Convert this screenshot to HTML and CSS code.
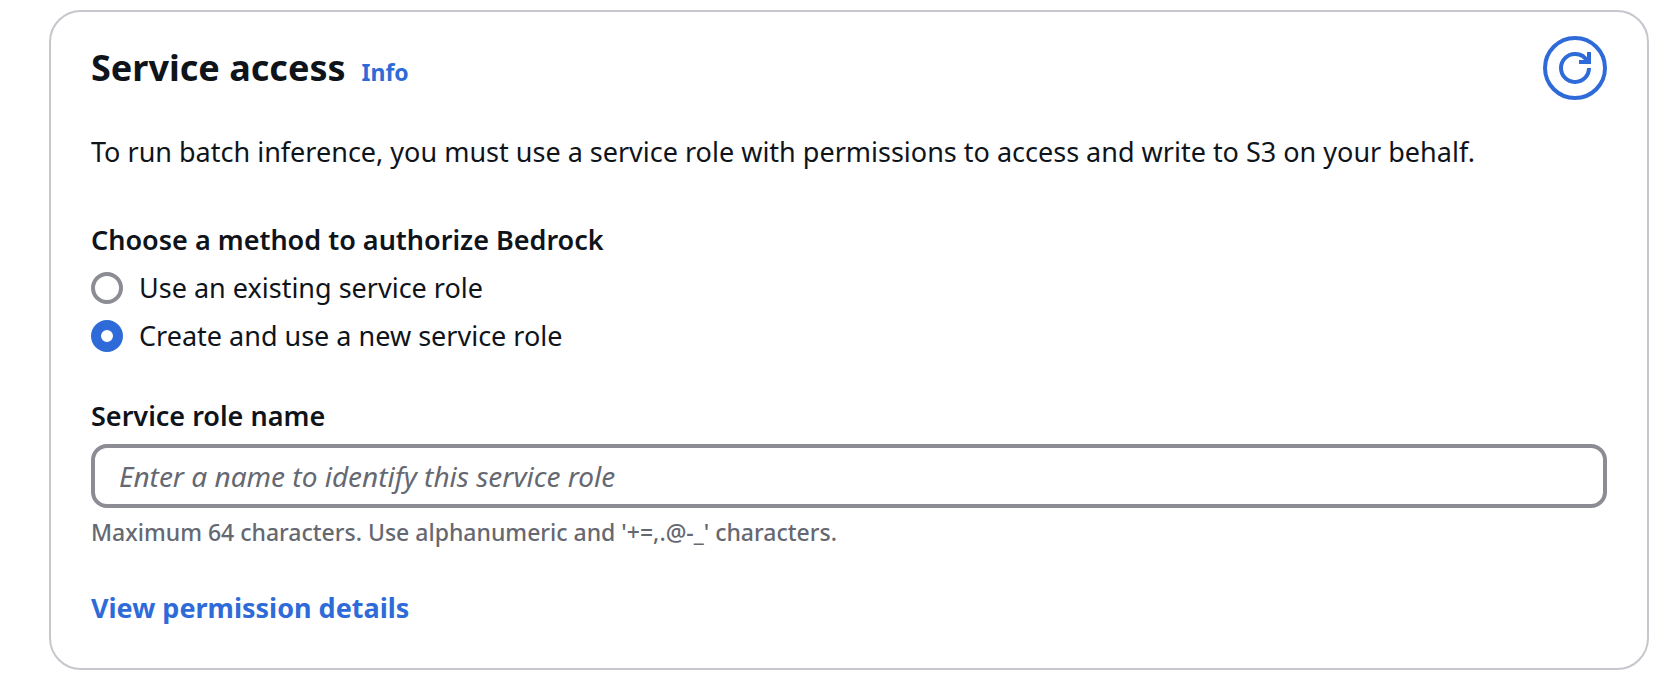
FILE: index.html
```html
<!DOCTYPE html>
<html lang="en">
<head>
    <meta charset="UTF-8">
    <meta name="viewport" content="width=device-width, initial-scale=1.0">
    <title>Service access</title>
    <link rel="stylesheet" href="styles.css">
</head>
<body>
    <form class="card">
        <header class="card-header">
            <div class="title">
                <h2>Service access</h2>
                <a class="info" href="#info">Info</a>
            </div>
            <button class="refresh" type="button" aria-label="Refresh">
                <svg viewBox="0 0 16 16" aria-hidden="true">
                    <path d="M10 5h5V0"/>
                    <path d="M15 8a6.957 6.957 0 0 1-7 7 6.957 6.957 0 0 1-7-7 6.957 6.957 0 0 1 7-7 6.87 6.87 0 0 1 6.3 4"/>
                </svg>
            </button>
        </header>

        <p class="description">To run batch inference, you must use a service role with permissions to access and write to S3 on your behalf.</p>

        <fieldset class="methods">
            <legend>Choose a method to authorize Bedrock</legend>
            <label class="option">
                <input type="radio" name="method" value="existing">
                Use an existing service role
            </label>
            <label class="option">
                <input type="radio" name="method" value="new" checked>
                Create and use a new service role
            </label>
        </fieldset>

        <div class="field">
            <label for="role-name">Service role name</label>
            <input type="text" id="role-name" maxlength="64" placeholder="Enter a name to identify this service role" aria-describedby="role-hint">
            <p class="hint" id="role-hint">Maximum 64 characters. Use alphanumeric and '+=,.@-_' characters.</p>
        </div>

        <a class="details" href="#permissions">View permission details</a>
    </form>
</body>
</html>
```
FILE: styles.css
```css
:root {
    --text-color: #0f141a;
    --muted-color: #656871;
    --control-border: #8c8c94;
    --card-border: #c6c6cd;
    --link-color: #2f6bd8;
}

* {
    box-sizing: border-box;
}

body {
    margin: 0;
    padding: 10px 19px 20px 49px;
    background-color: #fff;
    color: var(--text-color);
    font-family: "Noto Sans", "Open Sans", sans-serif;
    font-size: 27px;
    line-height: 40px;
}

h2,
p {
    margin: 0;
}

a {
    color: var(--link-color);
    font-weight: 700;
    text-decoration: none;
}

a:hover {
    text-decoration: underline;
}

.card {
    padding: 24px 40px 40px;
    border: 2px solid var(--card-border);
    border-radius: 32px;
}

.card-header {
    display: flex;
    align-items: center;
    justify-content: space-between;
}

.title {
    display: flex;
    align-items: baseline;
    gap: 16px;
}

.title h2 {
    font-size: 36px;
    font-weight: 700;
    line-height: 64px;
}

.info {
    font-size: 23px;
    line-height: 32px;
}

.refresh {
    display: flex;
    align-items: center;
    justify-content: center;
    width: 64px;
    height: 64px;
    padding: 0;
    border: 4px solid var(--link-color);
    border-radius: 50%;
    background: none;
    cursor: pointer;
}

.refresh svg {
    width: 32px;
    height: 32px;
    fill: none;
    stroke: var(--link-color);
    stroke-width: 2;
}

.description {
    margin-top: 32px;
}

.methods {
    display: flex;
    flex-direction: column;
    gap: 8px;
    margin: 48px 0 0;
    padding: 0;
    border: 0;
}

.methods legend {
    margin-bottom: 8px;
    padding: 0;
    font-weight: 600;
}

.option {
    display: flex;
    align-items: center;
    gap: 16px;
}

.option input {
    appearance: none;
    width: 32px;
    height: 32px;
    margin: 0;
    border: 4px solid var(--control-border);
    border-radius: 50%;
    background-color: #fff;
}

.option input:checked {
    border: 10px solid var(--link-color);
}

.field {
    display: flex;
    flex-direction: column;
    gap: 8px;
    margin: 40px 0;
}

.field label {
    font-weight: 600;
}

.field input {
    width: 100%;
    height: 64px;
    padding: 0 24px;
    border: 4px solid var(--control-border);
    border-radius: 16px;
    color: var(--text-color);
    font: inherit;
    font-size: 28px;
}

.field input::placeholder {
    color: var(--muted-color);
    font-style: italic;
    opacity: 1;
}

.hint {
    color: var(--muted-color);
    font-size: 23px;
    font-weight: 500;
    line-height: 32px;
}

.details {
    display: block;
}
```
